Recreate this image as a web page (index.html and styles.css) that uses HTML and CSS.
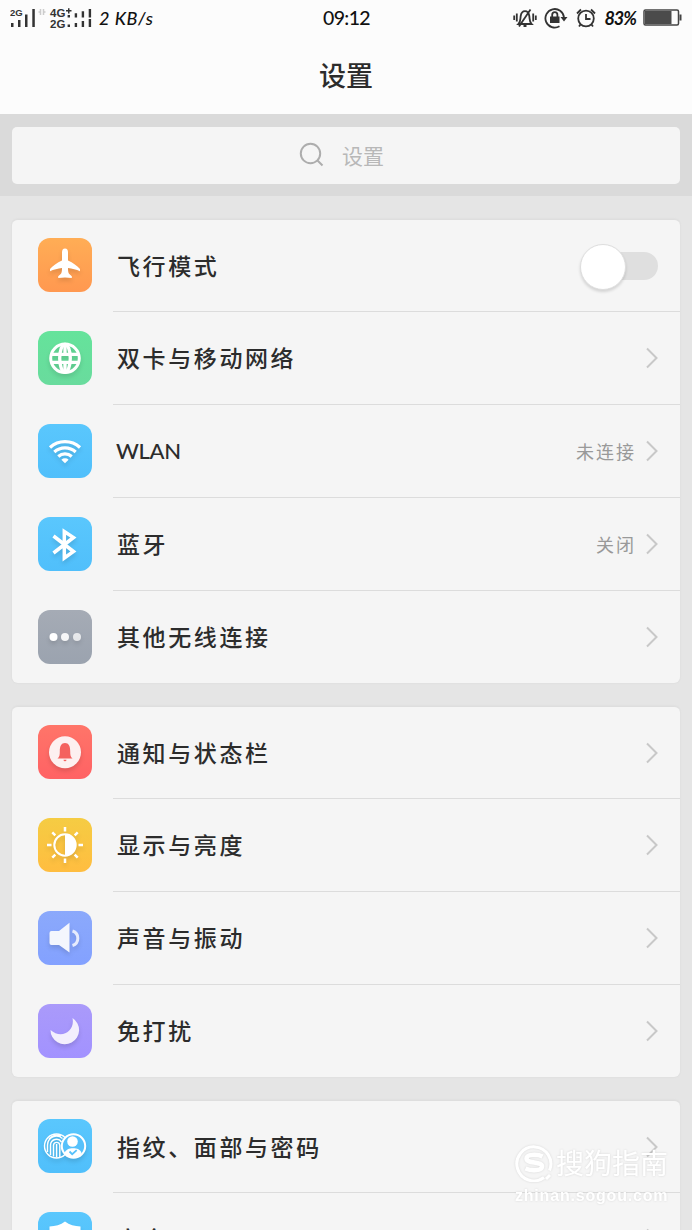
FILE: index.html
```html
<!DOCTYPE html>
<html lang="zh-CN">
<head>
  <meta charset="UTF-8">
  <title>设置</title>
  <link rel="stylesheet" href="styles.css">
</head>
<body>

  <header class="header">
    <div class="status-bar">
      <div class="status-left">
        <svg class="signal" width="83" height="24" viewBox="0 0 83 24">
          <text x="0" y="10" class="net-small">2G</text>
          <path d="M1 17h2.500v4H1zM8 14h2.500v7H8zM15 8.500h2.500V21H15zM22.300 3h2.500v18h-2.500z"/>
          <path class="arrows" d="M30.500 3v6M33.500 3v6M28.500 6h2M33.500 6h2"/>
          <text x="40" y="11.300" class="net">4G</text>
          <path d="M56 4h5.500v1.500H56zM58 2.200h1.500v5.300H58z"/>
          <text x="40" y="21.500" class="net">2G</text>
          <path d="M57.600 9H60v2.500h-2.400zM64.700 7.200h2.400v4.300h-2.400zM71.700 5.200h2.400v6.300h-2.400zM78.700 3h2.400v8.500h-2.400zM57.600 18.500H60V21h-2.400zM64.700 17h2.400v4h-2.400zM71.700 15h2.400v6h-2.400zM78.700 13h2.400v8h-2.400z"/>
        </svg>
        <span class="speed">2 KB/s</span>
      </div>
      <span class="time">09:12</span>
      <div class="status-right">
        <svg width="24" height="24" viewBox="0 0 24 24" class="line-icon">
          <path d="M5.500 18c2.200-2 1.700-5 2.200-8 .5-3 2-4.800 4.300-4.800s3.800 1.800 4.300 4.800c.5 3 0 6 2.200 8zM10.500 20h3M6 20.500L17.500 3.500M3.800 7.500v8M20.200 7.500v8M1.200 9.500v4.500M22.800 9.500v4.500"/>
        </svg>
        <svg width="24" height="24" viewBox="0 0 24 24" class="line-icon">
          <path d="M15.500 20.300A9.300 9.300 0 1 1 20 11.500"/>
          <path class="solid" d="M16.500 11h7l-3.500 4.500zM6 10.500h9.500V17H6z"/>
          <path d="M8.200 11V8.800a2.600 2.600 0 0 1 5.200 0V11"/>
        </svg>
        <svg width="22" height="24" viewBox="0 0 22 24" class="line-icon">
          <circle cx="11" cy="12.500" r="7.800"/>
          <path d="M11 8v5h4.500M2 7.500L6 3.500M20 7.500L16 3.500M5.500 18.500L4 20.500M16.500 18.500l1.500 2"/>
        </svg>
        <span class="percent">83%</span>
        <svg width="40" height="24" viewBox="0 0 40 24">
          <rect x="1" y="4" width="34.500" height="15" rx="1.500" fill="none" stroke="#444" stroke-width="1.500"/>
          <rect x="2" y="5" width="26.500" height="13" fill="#4b4b4b"/>
          <rect x="36.500" y="8.500" width="2" height="6" fill="#444"/>
        </svg>
      </div>
    </div>
    <h1>设置</h1>
  </header>

  <div class="search-section">
    <div class="search-box">
      <svg width="26" height="26" viewBox="0 0 26 26">
        <circle cx="11.500" cy="11.500" r="9.700"/>
        <path d="M18.500 18.500l5 5"/>
      </svg>
      <span>设置</span>
    </div>
  </div>

  <main>
    <section class="group">
      <div class="row">
        <div class="icon orange">
          <svg viewBox="0 0 54 54">
            <path fill="#fff" d="M27 10.500c2 0 3 1.700 3 3.700v8.300c4.800 2.200 9.500 5.500 12 8.500v2.300c-3.500-1.500-8-2.800-12-3.200 0 2.800.3 4.700 1 5.700l2.800 2.500v1.800l-6.800-.5-6.800.5v-1.800l2.800-2.500c.7-1 1-2.900 1-5.700-4 .4-8.500 1.700-12 3.200V31c2.500-3 7.200-6.300 12-8.500v-8.300c0-2 1-3.700 3-3.700z"/>
          </svg>
        </div>
        <div class="content">
          <span class="label">飞行模式</span>
          <span class="toggle"></span>
        </div>
      </div>

      <div class="row">
        <div class="icon green">
          <svg viewBox="0 0 54 54" fill="none" stroke="#fff" stroke-width="3.300">
            <circle cx="27" cy="27.300" r="14.300" stroke-width="3"/>
            <ellipse cx="27" cy="27.300" rx="5.300" ry="14"/>
            <path d="M13 23.300h28M13 31.300h28M27 13v9M27 32.500v9"/>
          </svg>
        </div>
        <div class="content">
          <span class="label">双卡与移动网络</span>
          <svg class="chevron" viewBox="0 0 12 22"><path d="M1 1.500l9.500 9.500L1 20.500"/></svg>
        </div>
      </div>

      <div class="row">
        <div class="icon blue">
          <svg viewBox="0 0 54 54" fill="none" stroke="#fff" stroke-width="3.200">
            <path d="M12 23.500a22 22 0 0 1 30 0M16.300 28a16 16 0 0 1 21.400 0M20.300 32.500a10 10 0 0 1 13.400 0"/>
            <path fill="#fff" stroke="none" d="M27 39.300l-3.600-3.500a5.200 5.200 0 0 1 7.200 0z"/>
          </svg>
        </div>
        <div class="content">
          <span class="label latin">WLAN</span>
          <span class="value">未连接</span>
          <svg class="chevron" viewBox="0 0 12 22"><path d="M1 1.500l9.500 9.500L1 20.500"/></svg>
        </div>
      </div>

      <div class="row">
        <div class="icon blue">
          <svg viewBox="0 0 54 54" fill="none" stroke="#fff" stroke-width="3.500">
            <path d="M15.500 19l20 15.500-9.200 6.500V14.500l9.200 6L15.500 36"/>
          </svg>
        </div>
        <div class="content">
          <span class="label">蓝牙</span>
          <span class="value">关闭</span>
          <svg class="chevron" viewBox="0 0 12 22"><path d="M1 1.500l9.500 9.500L1 20.500"/></svg>
        </div>
      </div>

      <div class="row">
        <div class="icon gray">
          <svg viewBox="0 0 54 54" fill="#fff">
            <circle cx="15.500" cy="27" r="4"/>
            <circle cx="27" cy="27" r="4" opacity=".9"/>
            <circle cx="39" cy="27" r="4" opacity=".75"/>
          </svg>
        </div>
        <div class="content">
          <span class="label">其他无线连接</span>
          <svg class="chevron" viewBox="0 0 12 22"><path d="M1 1.500l9.500 9.500L1 20.500"/></svg>
        </div>
      </div>
    </section>

    <section class="group">
      <div class="row">
        <div class="icon red">
          <svg viewBox="0 0 54 54">
            <circle cx="27" cy="27.300" r="16" fill="#fdf0f0"/>
            <path fill="#f4625f" d="M19.500 33.500c2-1.500 2.300-3.500 2.300-7.500 0-5 1.500-8 5.200-8s5.200 3 5.200 8c0 4 .3 6 2.300 7.500zM25.500 34.700h3a1.500 1.500 0 0 1-3 0z"/>
          </svg>
        </div>
        <div class="content">
          <span class="label">通知与状态栏</span>
          <svg class="chevron" viewBox="0 0 12 22"><path d="M1 1.500l9.500 9.500L1 20.500"/></svg>
        </div>
      </div>

      <div class="row">
        <div class="icon yellow">
          <svg viewBox="0 0 54 54" fill="none" stroke="#fff" stroke-width="2.500">
            <circle cx="27" cy="27" r="10.700" stroke-width="2"/>
            <path fill="#fff" stroke="none" d="M27 16.500a10.500 10.500 0 0 1 0 21z"/>
            <path d="M27 9v4.500M27 40.500V45M9 27h4.500M40.500 27H45M14.300 14.300l3 3M36.700 36.700l3 3M14.300 39.700l3-3M36.700 17.300l3-3"/>
          </svg>
        </div>
        <div class="content">
          <span class="label">显示与亮度</span>
          <svg class="chevron" viewBox="0 0 12 22"><path d="M1 1.500l9.500 9.500L1 20.500"/></svg>
        </div>
      </div>

      <div class="row">
        <div class="icon indigo">
          <svg viewBox="0 0 54 54">
            <path fill="#f4f6fd" d="M13.500 20h7.500l10.500-8.200v29.700L21 34h-7.500a2 2 0 0 1-2-2V22a2 2 0 0 1 2-2z"/>
            <path fill="none" stroke="#e6ebfd" stroke-width="3" d="M34.500 20a7.600 7.600 0 0 1 0 14.500"/>
          </svg>
        </div>
        <div class="content">
          <span class="label">声音与振动</span>
          <svg class="chevron" viewBox="0 0 12 22"><path d="M1 1.500l9.500 9.500L1 20.500"/></svg>
        </div>
      </div>

      <div class="row">
        <div class="icon purple">
          <svg viewBox="0 0 54 54">
            <path fill="#f3effd" d="M34.500 14a14.300 14.300 0 1 1-22 12c6 5.500 14 5.500 18.500.8 3.500-3.500 4.500-7.800 3.500-12.800z"/>
          </svg>
        </div>
        <div class="content">
          <span class="label">免打扰</span>
          <svg class="chevron" viewBox="0 0 12 22"><path d="M1 1.500l9.500 9.500L1 20.500"/></svg>
        </div>
      </div>
    </section>

    <section class="group">
      <div class="row">
        <div class="icon blue">
          <svg viewBox="0 0 54 54" fill="none" stroke="#fff" stroke-width="1.400">
            <circle cx="18.500" cy="27" r="12"/>
            <path d="M9.500 33v-7a9 9 0 0 1 15-6.500M12.500 36v-10a6 6 0 0 1 11-3M15.500 37.500V26a3.200 3.200 0 0 1 6.300 0v12M18.600 25v13.500M11 20a10 10 0 0 1 12-3"/>
            <circle cx="35.500" cy="27" r="11.700" fill="#56c1fb" stroke-width="2"/>
            <circle cx="34.500" cy="22.500" r="5.300" fill="#fff" stroke="none"/>
            <path fill="#fff" stroke="none" d="M26.500 34c1.500-3.500 4.500-4.800 8.500-4.800s7.500 1.300 8.500 4.800c-2 3-5 4.200-8.500 4.200s-6.500-1.200-8.500-4.200z"/>
            <path stroke="#56c1fb" stroke-width="1.800" d="M31.500 32.500l2.700 2.700 4.500-4"/>
          </svg>
        </div>
        <div class="content">
          <span class="label">指纹、面部与密码</span>
          <svg class="chevron" viewBox="0 0 12 22"><path d="M1 1.500l9.500 9.500L1 20.500"/></svg>
        </div>
      </div>

      <div class="row">
        <div class="icon blue">
          <svg viewBox="0 0 54 54">
            <path fill="#fff" d="M27 9.500c4.500 3.500 9.500 4.700 15.500 5v13C42.500 36 36 42 27 45c-9-3-15.500-9-15.500-17.500v-13c6-.3 11-1.500 15.500-5z"/>
          </svg>
        </div>
        <div class="content">
          <span class="label">安全</span>
          <svg class="chevron" viewBox="0 0 12 22"><path d="M1 1.500l9.500 9.500L1 20.500"/></svg>
        </div>
      </div>
    </section>
  </main>

  <div class="watermark">
    <div class="brand">
      <svg width="38" height="38" viewBox="0 0 38 38" fill="none" stroke="#fff">
        <path stroke-width="3" d="M29 33.500a17 17 0 1 1 5.500-7"/>
        <path stroke-width="4.500" d="M27.500 12.500c-5-2.500-16-2.500-16 2 0 5.500 15.500 2.500 15.500 8 0 4.500-10.500 4.500-16.500 2"/>
        <path stroke-width="3" d="M31 35l4-4"/>
      </svg>
      <span>搜狗指南</span>
    </div>
    <div class="site">zhinan.sogou.com</div>
  </div>

</body>
</html>
```

FILE: styles.css
```css
* {
  box-sizing: border-box;
}

body {
  margin: 0;
  height: 1230px;
  overflow: hidden;
  position: relative;
  background: #e5e5e5;
  color: #2c2c2c;
  font-family: "Noto Sans CJK SC", sans-serif;
}

svg {
  display: block;
  flex-shrink: 0;
}

.header {
  height: 114px;
  background: #fcfcfc;
}

.status-bar {
  display: grid;
  grid-template-columns: 1fr auto 1fr;
  align-items: center;
  height: 35px;
  padding: 0 9px 0 10px;
  color: #111;
  font-family: Lato, sans-serif;
  line-height: 1;
}

.status-left,
.status-right {
  display: flex;
  align-items: center;
}

.status-right {
  justify-content: flex-end;
}

.signal {
  fill: #333;
}

.net-small,
.net {
  font-family: "Liberation Sans", sans-serif;
  font-weight: bold;
  font-size: 9.5px;
}

.net {
  font-size: 11.5px;
}

.arrows {
  fill: none;
  stroke: #ccc;
  stroke-width: 1.5;
}

.speed {
  margin-left: 6px;
  font-size: 18px;
  font-weight: 500;
  font-style: italic;
  letter-spacing: 0.6px;
}

.time {
  font-size: 19.5px;
  font-weight: 500;
  letter-spacing: -0.6px;
}

.line-icon {
  margin-right: 7px;
  fill: none;
  stroke: #333;
  stroke-width: 1.8;
}

.line-icon .solid {
  fill: #333;
  stroke: none;
}

.percent {
  margin-right: 7px;
  font-size: 18px;
  font-weight: bold;
  font-style: italic;
  letter-spacing: -1px;
}

h1 {
  margin: 0;
  padding-top: 20px;
  font-size: 27px;
  font-weight: 500;
  line-height: 40px;
  text-align: center;
}

.search-section {
  height: 82px;
  padding: 13px 12px 12px;
  background: #dadada;
}

.search-box {
  display: flex;
  align-items: center;
  justify-content: center;
  gap: 17px;
  height: 57px;
  padding: 0 9px 1px 0;
  border-radius: 5px;
  background: #f5f5f5;
  color: #b8b8b8;
  font-size: 21px;
}

.search-box svg {
  fill: none;
  stroke: #adadad;
  stroke-width: 2;
}

main {
  display: flex;
  flex-direction: column;
  gap: 23px;
  padding: 23px 12px 0;
}

.group {
  border-radius: 6px;
  background: #f5f5f5;
  border-top: 1px solid #dedede;
  box-shadow: 0 0 1px 1px #e0e0e0;
}

.row {
  display: flex;
  align-items: stretch;
  height: 93px;
  padding-left: 26px;
}

.row:first-child {
  height: 92px;
}

.row:first-child .icon {
  margin-top: 18px;
}

.row:last-child {
  height: 92px;
}

.icon {
  width: 54px;
  height: 54px;
  margin: 19px 21px 0 0;
  border-radius: 12px;
}

.icon svg {
  width: 54px;
  height: 54px;
  filter: drop-shadow(0 3px 2px rgba(0, 0, 0, 0.12));
}

.orange { background: linear-gradient(#ffad55, #ff9850); }
.green { background: linear-gradient(#65e39b, #69db9d); }
.blue { background: linear-gradient(#5ac7fd, #50bffb); }
.gray { background: linear-gradient(#a5abb5, #9ba3af); }
.red { background: linear-gradient(#ff7569, #ff6264); }
.yellow { background: linear-gradient(#f5cc43, #ffbd40); }
.indigo { background: linear-gradient(#8ba9fb, #83a1ff); }
.purple { background: linear-gradient(#aa9afa, #a292ff); }

.content {
  display: flex;
  flex: 1;
  align-items: center;
  padding: 0 22px 0 4px;
  border-bottom: 1px solid #dcdcdc;
}

.row:last-child .content {
  border-bottom: none;
}

.label {
  flex: 1;
  padding-bottom: 2px;
  font-size: 23px;
  font-weight: 500;
  line-height: 34px;
  letter-spacing: 2.6px;
}

.latin {
  margin-left: -1px;
  padding-bottom: 0;
  font-family: Lato, sans-serif;
  font-size: 22px;
  letter-spacing: -0.3px;
}

.value {
  margin-right: 10px;
  padding-bottom: 1px;
  color: #999;
  font-size: 18px;
  letter-spacing: 2px;
}

.chevron {
  width: 12px;
  height: 22px;
  fill: none;
  stroke: #c8c8c8;
  stroke-width: 2;
}

.toggle {
  position: relative;
  width: 78px;
  height: 44px;
  padding: 8px 0 8px 10px;
}

.toggle::before {
  content: "";
  display: block;
  height: 28px;
  border-radius: 14px;
  background: #dfdfdf;
}

.toggle::after {
  content: "";
  position: absolute;
  top: 0;
  left: 0;
  width: 44px;
  height: 44px;
  border: 1px solid #dedede;
  border-radius: 50%;
  background: #fff;
  box-shadow: 0 2px 3px rgba(0, 0, 0, 0.14);
}

.watermark {
  position: absolute;
  left: 515px;
  top: 1143px;
  color: #fff;
  filter: drop-shadow(0 0 1px rgba(0, 0, 0, 0.12));
}

.brand {
  display: flex;
  align-items: center;
  gap: 3px;
  height: 39px;
  font-size: 28px;
  line-height: 37px;
}

.site {
  margin-top: 4px;
  font-family: "Liberation Sans", sans-serif;
  font-size: 16px;
  font-weight: bold;
  letter-spacing: 0.8px;
  line-height: 20px;
}
```
